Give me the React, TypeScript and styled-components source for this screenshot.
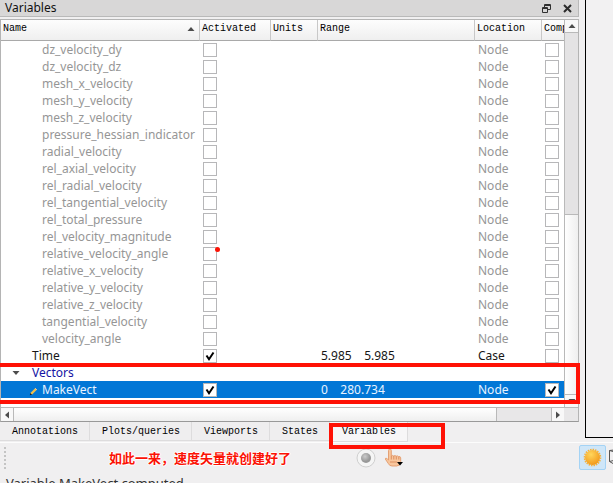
import React from "react";
import styled, { createGlobalStyle, css } from "styled-components";

const GlobalStyle = createGlobalStyle`
  *, *::before, *::after { box-sizing: border-box; }
  html, body { margin: 0; overflow: hidden; background: #f0eff0; }
  body { font-family: "Noto Sans", "Open Sans", "Noto Sans CJK SC", sans-serif; font-size: 12px; color: #111; }
  button { appearance: none; margin: 0; padding: 0; border: 0; background: none; color: inherit; font: inherit; }
  svg { display: block; }
`;

const mono = css`
  font-family: "Liberation Mono", "Noto Sans CJK SC", monospace;
  font-size: 10px;
  color: #000;
`;

const Window = styled.div`
  display: flex;
  flex-direction: column;
  min-height: 100vh;
`;

const Workspace = styled.main`
  display: flex;
  align-items: stretch;
`;

const Dock = styled.section`
  flex: 1;
  min-width: 0;
`;

const Canvas = styled.div`
  width: 28px;
  margin: 0 0 4px 6px;
  border: solid #000;
  border-width: 0 0 1px 1px;
  background: #f2f1f2;
`;

const TitleBar = styled.header`
  display: flex;
  align-items: center;
  gap: 12px;
  height: 17px;
  padding: 0 6px 0 5px;
  border: solid #b9b9b9;
  border-width: 0 1px 1px 0;
  background: #d8d7d7;
`;

const Title = styled.h1`
  flex: 1;
  margin: 0;
  font-size: 12px;
  font-weight: 400;
  line-height: 16px;
`;

const Frame = styled.div`
  position: relative;
  margin-top: 2px;
  border: 1px solid #b4b4b4;
  border-bottom-color: #999;
  background: #fff;
`;

const Body = styled.div`
  display: flex;
`;

const TableArea = styled.div`
  flex: 1;
  min-width: 0;
  padding-bottom: 9px;
  overflow: hidden;
`;

const Table = styled.table`
  width: 100%;
  table-layout: fixed;
  border-collapse: separate;
  border-spacing: 0;
`;

const Col = styled.col<{ $w?: number }>`
  width: ${(p) => (p.$w ? `${p.$w}px` : "auto")};
`;

const Head = styled.th`
  ${mono}
  height: 21px;
  padding: 0 2px;
  overflow: hidden;
  border-bottom: 1px solid #a9a9a9;
  background: linear-gradient(#fdfdfd, #efefef);
  font-weight: 400;
  line-height: 18px;
  text-align: left;
  vertical-align: top;
  white-space: nowrap;
  & + & { border-left: 1px solid #c8c8c8; }
`;

const SortButton = styled.button`
  display: flex;
  align-items: center;
  justify-content: space-between;
  width: 100%;
  padding-right: 2px;
  line-height: 18px;
`;

type Tone = "muted" | "plain" | "group" | "selected";
const toneColor: Record<Tone, string> = {
  muted: "#969696",
  plain: "#161616",
  group: "#1414a4",
  selected: "#e8f3ff",
};

const Row = styled.tr<{ $tone: Tone }>`
  height: 17px;
  color: ${(p) => toneColor[p.$tone]};
  background: ${(p) => (p.$tone === "selected" ? "#0277d6" : "#fff")};
`;

const Cell = styled.td`
  height: 17px;
  padding: 0 0 0 4px;
  line-height: 17px;
  white-space: pre;
`;

const NameCell = styled(Cell)<{ $leaf: boolean }>`
  padding-left: ${(p) => (p.$leaf ? 28 : 11)}px;
`;

const NameLine = styled.span`
  display: flex;
  align-items: center;
  height: 17px;
`;

const Marker = styled.span<{ $w: number }>`
  display: flex;
  width: ${(p) => p.$w}px;
`;

const Tick = styled.label`
  position: relative;
  display: block;
  width: 14px;
  height: 14px;
  svg { position: absolute; inset: 0; pointer-events: none; }
  input:not(:checked) + svg { display: none; }
`;

const Box = styled.input`
  display: block;
  appearance: none;
  width: 14px;
  height: 14px;
  margin: 0;
  border: 1px solid #b7b7b9;
  background: #fff;
`;

const RedDot = styled.span`
  position: absolute;
  top: 0;
  left: 12px;
  width: 5px;
  height: 5px;
  border-radius: 50%;
  background: #fb1205;
`;

const VScroll = styled.div`
  display: flex;
  flex-direction: column;
  width: 14px;
  border-left: 1px solid #b9b9b9;
  background: #e4e3e4;
`;

const VTrack = styled.div`
  display: flex;
  flex: 1;
  flex-direction: column;
  justify-content: flex-end;
`;

const VThumb = styled.div`
  height: 50%;
  border-top: 1px solid #b9b9b9;
  background: linear-gradient(90deg, #fff, #efefef);
`;

const ArrowButton = styled.button<{ $edge: "top" | "bottom" | "left" | "right" }>`
  display: flex;
  flex: none;
  align-items: center;
  justify-content: center;
  width: 13px;
  height: 13px;
  border-${(p) => p.$edge}: 1px solid #b9b9b9;
  background: #f8f8f8;
`;

const HScroll = styled.div`
  display: flex;
  height: 14px;
  padding-right: 14px;
  border-top: 1px solid #b9b9b9;
  background: #e8e7e8;
`;

const HTrack = styled.div`
  flex: 1;
`;

const HThumb = styled.div`
  width: 90%;
  height: 13px;
  border-right: 1px solid #b9b9b9;
  background: linear-gradient(#fff, #efefef);
`;

const RowsHighlight = styled.div`
  position: absolute;
  left: -5px;
  right: -2px;
  bottom: 17px;
  height: 41px;
  border: 4px solid #ff1105;
  pointer-events: none;
`;

const Tabs = styled.nav`
  display: flex;
  height: 20px;
`;

const Tab = styled.button<{ $active?: boolean }>`
  ${mono}
  position: relative;
  height: ${(p) => (p.$active ? 20 : 19)}px;
  padding: 1px 11px 0 12px;
  border: solid #dddcdd;
  border-width: 0 1px 1px 0;
  background: ${(p) => (p.$active ? "#f7f6f7" : "#efeeef")};
  line-height: 18px;
`;

const TabHighlight = styled.span`
  position: absolute;
  top: 1px;
  left: -1px;
  width: 116px;
  height: 26px;
  border: 4px solid #ff1105;
  pointer-events: none;
`;

const Toolbar = styled.div`
  display: flex;
  align-items: center;
  height: 31px;
  padding-left: 4px;
  border-top: 1px solid #fcfcfc;
  overflow: hidden;
`;

const Note = styled.p`
  flex: none;
  width: 247px;
  margin: 0 0 0 101px;
  color: #fb1205;
  font: 700 13px/20px "Noto Sans CJK SC", sans-serif;
  white-space: nowrap;
  text-shadow: 1px 0 #fff, -1px 0 #fff, 0 1px #fff, 0 -1px #fff;
`;

const ToolButton = styled.button<{ $w: number }>`
  flex: none;
  width: ${(p) => p.$w}px;
`;

const Spacer = styled.div`
  flex: 1;
`;

const LightButton = styled.button`
  display: flex;
  flex: none;
  align-items: center;
  justify-content: center;
  width: 27px;
  height: 25px;
  margin-bottom: 2px;
  border: 1px solid #a4d3f5;
  border-radius: 2px;
  background: #cfe6f8;
`;

const CubeButton = styled.button`
  flex: none;
  width: 7px;
  padding-left: 3px;
  overflow: hidden;
`;

const Status = styled.footer`
  padding-left: 6px;
  color: #333;
  font-size: 13px;
  line-height: 20px;
  white-space: nowrap;
`;

type Direction = "up" | "down" | "left" | "right";
const arrows: Record<Direction, string> = {
  up: "M4 2 7.5 6h-7z",
  down: "M.5 2h7L4 6z",
  left: "M6 .5v7L2 4z",
  right: "M2 .5v7L6 4z",
};

const Arrow = ({ to }: { to: Direction }) => (
  <svg width="8" height="8" viewBox="0 0 8 8" aria-hidden="true">
    <path d={arrows[to]} fill="#4c4c4c" />
  </svg>
);

const Pencil = () => (
  <svg width="9" height="13" viewBox="0 -4 9 13" aria-hidden="true">
    <path d="M2 7 7 2" stroke="#f0c04a" strokeWidth="2.4" />
    <path d="m6 1 2 2" stroke="#d9c3a4" strokeWidth="1" />
    <path d="M.8 8.2 1.3 6l1.8 1.7z" fill="#17202a" />
  </svg>
);

const Check = ({ label, checked, dot }: { label: string; checked?: boolean; dot?: boolean }) => (
  <Tick>
    <Box type="checkbox" aria-label={label} defaultChecked={checked} />
    <svg width="14" height="14" viewBox="0 0 14 14" aria-hidden="true">
      <path d="M3.5 6.5 6 10.2 10.5 3.5" fill="none" stroke="#000" strokeWidth="2" />
    </svg>
    {dot && <RedDot />}
  </Tick>
);

interface Variable {
  name: string;
  tone: Tone;
  leaf: boolean;
  active?: boolean;
  computed?: boolean;
  range?: string;
  location?: string;
  dot?: boolean;
}

const nodeNames = [
  "dz_velocity_dy", "dz_velocity_dz", "mesh_x_velocity", "mesh_y_velocity", "mesh_z_velocity",
  "pressure_hessian_indicator", "radial_velocity", "rel_axial_velocity", "rel_radial_velocity",
  "rel_tangential_velocity", "rel_total_pressure", "rel_velocity_magnitude",
  "relative_velocity_angle", "relative_x_velocity", "relative_y_velocity",
  "relative_z_velocity", "tangential_velocity", "velocity_angle",
];

const variables: Variable[] = [
  ...nodeNames.map((name): Variable => ({
    name, tone: "muted", leaf: true, location: "Node", dot: name === "relative_velocity_angle",
  })),
  { name: "Time", tone: "plain", leaf: false, active: true, range: "5.985    5.985", location: "Case" },
  { name: "Vectors", tone: "group", leaf: false },
  { name: "MakeVect", tone: "selected", leaf: true, active: true, computed: true, range: "0    280.734", location: "Node" },
];

const VariableRow = ({ v }: { v: Variable }) => (
  <Row $tone={v.tone}>
    <NameCell $leaf={v.leaf}>
      <NameLine>
        <Marker $w={v.leaf ? 13 : 20}>
          {v.tone === "selected" && <Pencil />}
          {v.tone === "group" && <Arrow to="down" />}
        </Marker>
        {v.name}
      </NameLine>
    </NameCell>
    <Cell>{v.location && <Check label={`Activate ${v.name}`} checked={v.active} dot={v.dot} />}</Cell>
    <Cell />
    <Cell>{v.range}</Cell>
    <Cell>{v.location}</Cell>
    <Cell>{v.location && <Check label={`Computed ${v.name}`} checked={v.computed} />}</Cell>
  </Row>
);

const VariablesTable = () => (
  <Table>
    <colgroup>
      <Col $w={198} /><Col $w={71} /><Col $w={47} /><Col /><Col $w={67} /><Col $w={23} />
    </colgroup>
    <thead>
      <tr>
        <Head><SortButton>Name<Arrow to="up" /></SortButton></Head>
        <Head>Activated</Head>
        <Head>Units</Head>
        <Head>Range</Head>
        <Head>Location</Head>
        <Head>Computed</Head>
      </tr>
    </thead>
    <tbody>{variables.map((v) => <VariableRow key={v.name} v={v} />)}</tbody>
  </Table>
);

const RestoreIcon = () => (
  <svg width="9" height="9" viewBox="0 0 9 9" fill="none" stroke="#303030" aria-hidden="true">
    <path d="M2.5 3V.5h6v5H6M2.5 1.5h6" />
    <path d="M.5 3.5h5v5h-5zM.5 4.5h5" />
  </svg>
);

const CloseIcon = () => (
  <svg width="9" height="9" viewBox="0 0 9 9" aria-hidden="true">
    <path d="m1 1 7 7M8 1 1 8" stroke="#2b2b2b" strokeWidth="2" />
  </svg>
);

const Grip = () => (
  <svg width="4" height="24" viewBox="0 0 4 24" aria-hidden="true">
    <path d="M1 1v23" stroke="#c4c4c4" strokeWidth="2" strokeDasharray="2 2" />
  </svg>
);

const RecordIcon = () => (
  <svg width="20" height="20" viewBox="0 0 20 20" aria-hidden="true">
    <defs>
      <radialGradient id="ball" cx=".4" cy=".35"><stop offset="0" stopColor="#ccc" /><stop offset="1" stopColor="#989898" /></radialGradient>
    </defs>
    <circle cx="10" cy="10" r="9" fill="#f5f5f5" stroke="#cfcfcf" />
    <circle cx="10" cy="10" r="5" fill="url(#ball)" />
  </svg>
);

const HandIcon = () => (
  <svg width="20" height="20" viewBox="0 0 20 20" aria-hidden="true">
    <path d="M4.500 12V2.400Q4.700.8 6 .9 7.300 1 7.300 2.500V8q1-1.200 2.400 0 1.200-1 2.500.2 1.400-.8 2.500.4 1.700-.5 2 1.200v4q0 4-4 4.200H8q-2.500 0-3.700-2.500L1.300 11q.2-2 3.200 1z" fill="#f8c69d" stroke="#e29a6b" strokeWidth=".9" />
    <path d="M7.300 8v3.500M9.800 8v3.500M12.300 8.300v3.200M14.800 9v2.500M6 14h7" stroke="#dc8e60" fill="none" />
    <path d="M13 14h6l-3 3.500z" fill="#000" />
  </svg>
);

const SunIcon = () => (
  <svg width="19" height="19" viewBox="0 0 19 19" aria-hidden="true">
    <defs>
      <radialGradient id="sun" cx=".4" cy=".3" r=".7"><stop offset="0" stopColor="#ffd65c" /><stop offset="1" stopColor="#f29a1c" /></radialGradient>
    </defs>
    <circle cx="9.5" cy="9.5" r="8" fill="none" stroke="#f5b23d" strokeWidth="1.6" strokeDasharray="1.5 1" />
    <circle cx="9.5" cy="9.5" r="7.5" fill="url(#sun)" />
  </svg>
);

const CubeIcon = () => (
  <svg width="18" height="18" viewBox="0 0 18 18" fill="none" stroke="#555" aria-hidden="true">
    <path d="m.5 1.500 7 2v13l-7-4zM.5 1.500 10 .5l7 2-9.500 1M17 2.500v10l-9.500 4M.5 12.500l8-2" />
  </svg>
);

export default function App() {
  return (
    <Window>
      <GlobalStyle />
      <Workspace>
        <Dock>
          <TitleBar>
            <Title>Variables</Title>
            <button aria-label="Float panel"><RestoreIcon /></button>
            <button aria-label="Close panel"><CloseIcon /></button>
          </TitleBar>
          <Frame>
            <Body>
              <TableArea><VariablesTable /></TableArea>
              <VScroll>
                <ArrowButton $edge="bottom" aria-label="Scroll up"><Arrow to="up" /></ArrowButton>
                <VTrack><VThumb /></VTrack>
                <ArrowButton $edge="top" aria-label="Scroll down"><Arrow to="down" /></ArrowButton>
              </VScroll>
            </Body>
            <HScroll>
              <ArrowButton $edge="right" aria-label="Scroll left"><Arrow to="left" /></ArrowButton>
              <HTrack><HThumb /></HTrack>
              <ArrowButton $edge="left" aria-label="Scroll right"><Arrow to="right" /></ArrowButton>
            </HScroll>
            <RowsHighlight />
          </Frame>
          <Tabs aria-label="Panels">
            <Tab>Annotations</Tab>
            <Tab>Plots/queries</Tab>
            <Tab>Viewports</Tab>
            <Tab>States</Tab>
            <Tab $active aria-current="page">Variables<TabHighlight /></Tab>
          </Tabs>
        </Dock>
        <Canvas />
      </Workspace>
      <Toolbar>
        <Grip />
        <Note>如此一来，速度矢量就创建好了</Note>
        <ToolButton $w={28} aria-label="Record"><RecordIcon /></ToolButton>
        <ToolButton $w={20} aria-label="Pick"><HandIcon /></ToolButton>
        <Spacer />
        <LightButton aria-label="Lighting"><SunIcon /></LightButton>
        <CubeButton aria-label="Perspective"><CubeIcon /></CubeButton>
      </Toolbar>
      <Status>Variable MakeVect computed</Status>
    </Window>
  );
}
